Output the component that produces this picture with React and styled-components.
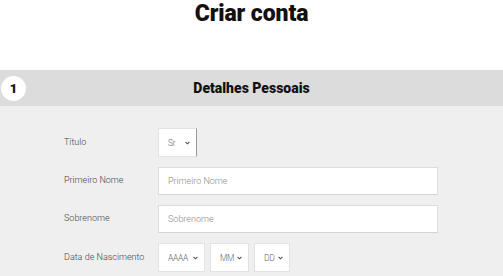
import React from "react";
import styled, { createGlobalStyle } from "styled-components";

const Global = createGlobalStyle`
  html, body { margin: 0; padding: 0; background: #ffffff; }
  body { font-family: Roboto, "Liberation Sans", sans-serif; }
`;

const Page = styled.div`
  width: 503px;
  display: flex;
  flex-direction: column;
`;

const Title = styled.h1`
  margin: 0;
  height: 70px;
  font-family: Roboto, "Liberation Sans", sans-serif;
  font-weight: 900;
  font-size: 23px;
  line-height: 28px;
  color: #111;
  text-align: center;
  letter-spacing: -0.1px;
`;

const Section = styled.section`
  background: #efefef;
  min-height: 206px;
`;

const SectionHeader = styled.div`
  height: 36px;
  background: #dcdcdc;
  display: grid;
  grid-template-columns: 1fr auto 1fr;
  align-items: center;
`;

const StepBadge = styled.div`
  width: 25px;
  height: 25px;
  margin-left: 1px;
  border-radius: 50%;
  background: #ffffff;
  display: flex;
  align-items: center;
  justify-content: center;
  font-weight: 900;
  font-size: 13px;
  color: #111;
`;

const SectionTitle = styled.h2`
  margin: 0;
  font-weight: 900;
  font-size: 14px;
  color: #111;
`;

const Form = styled.div`
  padding: 22px 0 0 64px;
  display: flex;
  flex-direction: column;
  gap: 10px;
`;

const Row = styled.div`
  display: grid;
  grid-template-columns: 94px auto;
  align-items: center;
`;

const Label = styled.label`
  font-size: 9px;
  font-weight: 300;
  color: #444;
  padding-bottom: 2px;
`;

const Controls = styled.div`
  display: flex;
  gap: 5px;
`;

const Input = styled.input`
  box-sizing: border-box;
  width: 280px;
  height: 28px;
  border: 1px solid #dddddd;
  border-bottom-color: #d3d3d3;
  background: #ffffff;
  padding: 0 9px;
  font-family: Roboto, "Liberation Sans", sans-serif;
  font-weight: 300;
  font-size: 9px;
  color: #333;
  outline: none;
  &::placeholder { color: #8a8a8a; }
`;

const SelectBox = styled.div`
  box-sizing: border-box;
  width: ${(p) => p.$w}px;
  height: 29px;
  background: #ffffff;
  border: 1px solid #e2e2e2;
  border-right-color: ${(p) => (p.$dark ? "#9a9a9a" : "#e2e2e2")};
  display: flex;
  align-items: center;
  justify-content: space-between;
  padding: 0 6px 0 9px;
  font-size: 8.5px;
  font-weight: 300;
  letter-spacing: -0.3px;
  color: #666;
`;

const Chevron = () => (
  <svg width="5" height="4" viewBox="0 0 5 4">
    <path d="M0.6 1 L2.5 2.8 L4.4 1" fill="none" stroke="#555" strokeWidth="1.1" />
  </svg>
);

const Select = ({ w, dark, children }) => (
  <SelectBox $w={w} $dark={dark}>
    <span>{children}</span>
    <Chevron />
  </SelectBox>
);

export default function App() {
  return (
    <>
      <Global />
      <Page>
        <Title>Criar conta</Title>
        <Section>
          <SectionHeader>
            <StepBadge>1</StepBadge>
            <SectionTitle>Detalhes Pessoais</SectionTitle>
            <span />
          </SectionHeader>
          <Form>
            <Row>
              <Label>Título</Label>
              <Controls>
                <Select w={39} dark>Sr</Select>
              </Controls>
            </Row>
            <Row>
              <Label>Primeiro Nome</Label>
              <Input placeholder="Primeiro Nome" />
            </Row>
            <Row>
              <Label>Sobrenome</Label>
              <Input placeholder="Sobrenome" />
            </Row>
            <Row>
              <Label>Data de Nascimento</Label>
              <Controls>
                <Select w={47}>AAAA</Select>
                <Select w={39}>MM</Select>
                <Select w={36}>DD</Select>
              </Controls>
            </Row>
          </Form>
        </Section>
      </Page>
    </>
  );
}
